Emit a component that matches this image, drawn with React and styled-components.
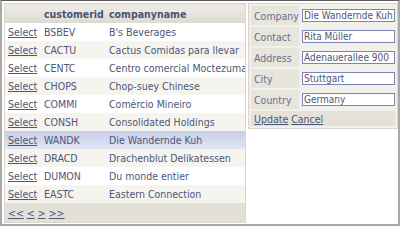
import React from 'react';
import styled, { createGlobalStyle } from 'styled-components';

const customers = [
	['BSBEV', "B's Beverages"],
	['CACTU', 'Cactus Comidas para llevar'],
	['CENTC', 'Centro comercial Moctezuma'],
	['CHOPS', 'Chop-suey Chinese'],
	['COMMI', 'Comércio Mineiro'],
	['CONSH', 'Consolidated Holdings'],
	['WANDK', 'Die Wandernde Kuh'],
	['DRACD', 'Drachenblut Delikatessen'],
	['DUMON', 'Du monde entier'],
	['EASTC', 'Eastern Connection'],
];

const fields = [
	['Company', 'Die Wandernde Kuh'],
	['Contact', 'Rita Müller'],
	['Address', 'Adenauerallee 900'],
	['City', 'Stuttgart'],
	['Country', 'Germany'],
];

const selectedId = 'WANDK';

const App = () => {
	return (
		<>
			<GlobalStyle />
			<Frame>
				<Grid>
					<thead>
						<tr>
							<HeadCell />
							<HeadCell>customerid</HeadCell>
							<HeadCell>companyname</HeadCell>
						</tr>
					</thead>
					<tbody>
						{customers.map(([id, name], i) => (
							<Row key={id} $alt={i % 2 === 1} $selected={id === selectedId}>
								<Cell><Link>Select</Link></Cell>
								<Cell>{id}</Cell>
								<Cell>{name}</Cell>
							</Row>
						))}
						<tr>
							<Pager colSpan={3}>
								<Link>&lt;&lt;</Link> <Link>&lt;</Link> <Link>&gt;</Link> <Link>&gt;&gt;</Link>
							</Pager>
						</tr>
					</tbody>
				</Grid>
				<Details>
					<tbody>
						{fields.map(([label, value]) => (
							<tr key={label}>
								<Label>{label}</Label>
								<Value>
									<Input defaultValue={value} />
								</Value>
							</tr>
						))}
						<tr>
							<Footer colSpan={2}>
								<Link>Update</Link> <Link>Cancel</Link>
							</Footer>
						</tr>
					</tbody>
				</Details>
			</Frame>
		</>
	);
};

export default App;

const GlobalStyle = createGlobalStyle`
	html, body {
		margin: 0;
		padding: 0;
		background: #ffffff;
		overflow: hidden;
	}
	body {
		font-family: "DejaVu Sans Condensed", "DejaVu Sans", sans-serif;
		font-size: 10.5px;
		color: #4f5679;
	}
`;
const Frame = styled.div`
	width: 400px;
	height: 226px;
	box-sizing: border-box;
	border: 2px solid #a9a9a9;
	border-top: 1px solid #5c5c5c;
	padding: 2px 0 0 2px;
	display: flex;
	align-items: flex-start;
	gap: 2px;
`;
const Grid = styled.table`
	width: 242px;
	border-collapse: collapse;
	border: 1px solid #dad8ce;
	table-layout: fixed;
`;
const HeadCell = styled.th`
	height: 19px;
	padding: 0 0 0 3px;
	text-align: left;
	font-weight: bold;
	color: #4a5378;
	background: linear-gradient(#efede6, #dcdad0);
	white-space: nowrap;
	&:first-child { width: 33px; }
	&:nth-child(2) { width: 62px; }
`;
const Row = styled.tr`
	background: ${p => p.$selected
		? 'linear-gradient(#c6cde8, #e1e5f3)'
		: p.$alt ? '#f5f4ef' : '#ffffff'};
`;
const Cell = styled.td`
	height: 18px;
	padding: 0 0 0 3px;
	white-space: nowrap;
	overflow: hidden;
`;
const Link = styled.a`
	color: #4f5679;
	text-decoration: underline;
	cursor: pointer;
`;
const Pager = styled.td`
	height: 19px;
	padding: 0 0 0 3px;
	background: #e2e0d7;
	white-space: nowrap;
`;
const Details = styled.table`
	width: 150px;
	border: 1px solid #d8d6cc;
	border-spacing: 2px;
	background: #f1f0eb;
`;
const Label = styled.td`
	width: 42px;
	height: 19px;
	padding: 0 0 0 3px;
	background: #e7e5dc;
	color: #6a7093;
	white-space: nowrap;
`;
const Value = styled.td`
	padding: 0 0 0 1px;
`;
const Input = styled.input`
	box-sizing: border-box;
	width: 93px;
	height: 13px;
	margin: 0;
	padding: 0 1px;
	border: 1px solid #7c84b2;
	font-family: inherit;
	font-size: 10px;
	color: #4f5679;
	background: #ffffff;
	outline: none;
`;
const Footer = styled.td`
	height: 15px;
	padding: 0 0 0 3px;
	background: #e3e1d8;
	white-space: nowrap;
`;
